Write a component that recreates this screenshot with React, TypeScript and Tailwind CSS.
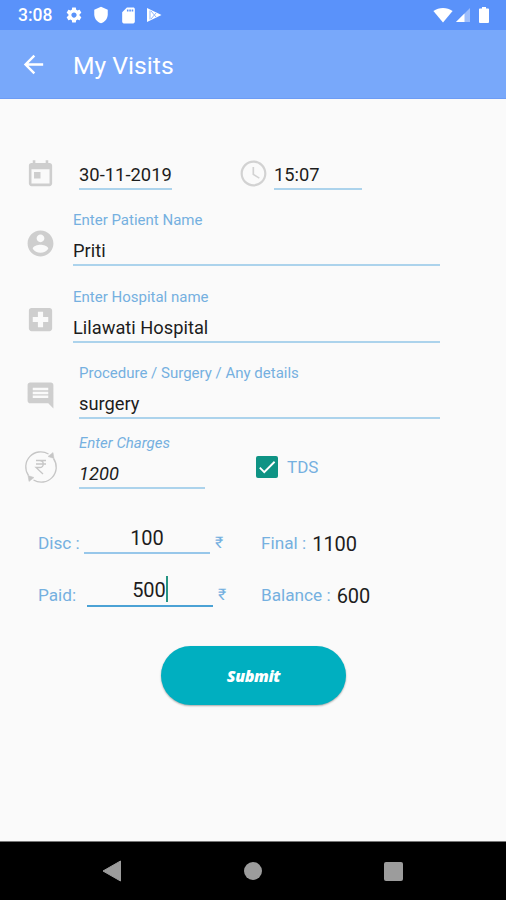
import type { ReactNode } from "react";

type IconProps = { className?: string; d: string };

function Icon({ className = "", d }: IconProps) {
  return (
    <svg viewBox="0 0 24 24" fill="currentColor" className={`shrink-0 ${className}`}>
      <path d={d} />
    </svg>
  );
}

const paths = {
  gear: "M19.43 12.98c.04-.32.07-.64.07-.98s-.03-.66-.07-.98l2.11-1.65c.19-.15.24-.42.12-.64l-2-3.46c-.12-.22-.39-.3-.61-.22l-2.49 1c-.52-.4-1.08-.73-1.69-.98l-.38-2.65C14.46 2.18 14.25 2 14 2h-4c-.25 0-.46.18-.49.42l-.38 2.65c-.61.25-1.17.59-1.69.98l-2.49-1c-.23-.09-.49 0-.61.22l-2 3.46c-.13.22-.07.49.12.64l2.11 1.65c-.04.32-.07.65-.07.98s.03.66.07.98l-2.11 1.65c-.19.15-.24.42-.12.64l2 3.46c.12.22.39.3.61.22l2.49-1c.52.4 1.08.73 1.69.98l.38 2.65c.03.24.24.42.49.42h4c.25 0 .46-.18.49-.42l.38-2.65c.61-.25 1.17-.59 1.69-.98l2.49 1c.23.09.49 0 .61-.22l2-3.46c.12-.22.07-.49-.12-.64l-2.11-1.65zM12 15.5c-1.93 0-3.5-1.57-3.5-3.5s1.57-3.5 3.5-3.5 3.5 1.57 3.5 3.5-1.57 3.5-3.5 3.5z",
  shield: "M12 1L3 5v6c0 5.55 3.84 10.74 9 12 5.16-1.26 9-6.45 9-12V5l-9-4z",
  sd: "M18 2h-8L4.020 8 4 20c0 1.100.9 2 2 2h12c1.100 0 2-.9 2-2V4c0-1.100-.9-2-2-2zm-6 5h-2V4.500h2V7zm3 0h-2V4.500h2V7zm3 0h-2V4.500h2V7z",
  back: "M20 11H7.830l5.590-5.590L12 4l-8 8 8 8 1.410-1.410L7.830 13H20v-2z",
  today: "M19 3h-1V1h-2v2H8V1H6v2H5c-1.110 0-1.990.9-1.990 2L3 19c0 1.100.89 2 2 2h14c1.100 0 2-.9 2-2V5c0-1.100-.9-2-2-2zm0 16H5V8h14v11zM7 10h5v5H7z",
  clock: "M11.990 2C6.470 2 2 6.480 2 12s4.470 10 9.990 10C17.520 22 22 17.520 22 12S17.520 2 11.990 2zM12 20.300a8.300 8.300 0 1 1 0-16.600 8.300 8.300 0 0 1 0 16.600zM12.500 7H11.200v6l5 3 .6-1-4.300-2.600z",
  person: "M12 2C6.480 2 2 6.480 2 12s4.480 10 10 10 10-4.480 10-10S17.520 2 12 2zm0 3c1.660 0 3 1.340 3 3s-1.340 3-3 3-3-1.340-3-3 1.340-3 3-3zm0 14.200c-2.500 0-4.710-1.280-6-3.220.03-1.990 4-3.080 6-3.080 1.990 0 5.970 1.090 6 3.080-1.290 1.940-3.500 3.220-6 3.220z",
  hospital: "M19 3H5c-1.100 0-1.990.9-1.990 2L3 19c0 1.100.9 2 2 2h14c1.100 0 2-.9 2-2V5c0-1.100-.9-2-2-2zm-1 11h-4v4h-4v-4H6v-4h4V6h4v4h4v4z",
  comment: "M21.990 4c0-1.100-.89-2-1.990-2H4c-1.100 0-2 .9-2 2v12c0 1.100.9 2 2 2h14l4 4-.01-18zM18 14H6v-2h12v2zm0-3H6V9h12v2zm0-3H6V6h12v2z",
  check: "M9 16.170L4.830 12l-1.420 1.410L9 19 21 7l-1.410-1.410z",
};

function StatusBar() {
  return (
    <header className="flex h-[30px] items-center bg-[#5a92fa] pl-[18px] text-white">
      <span className="w-[35px] pt-[2px] text-[17.500px] font-medium leading-none">3:08</span>
      <Icon d={paths.gear} className="ml-[12px] size-[18px]" />
      <Icon d={paths.shield} className="ml-[9px] size-[18px]" />
      <Icon d={paths.sd} className="ml-[9px] size-[19px]" />
      <svg viewBox="0 0 16 16" className="ml-[8px] size-4">
        <path d="M1 1 15.500 8 1 15z" fill="white" />
        <path d="M4 3.500v9M5 4l5 6M5 12l5-6" stroke="#8fb5fb" strokeWidth="1" fill="none" />
      </svg>
      <svg viewBox="0 0 20 16" className="ml-auto h-4 w-5">
        <path d="M.4 4C6 0 14 0 19.600 4L10 15.500z" fill="white" />
      </svg>
      <svg viewBox="0 0 16 16" className="ml-[2px] size-4">
        <path d="M15 1v14H1z" fill="white" opacity=".4" />
        <path d="M9.500 6.500V15H1z" fill="white" />
      </svg>
      <svg viewBox="0 0 12 18" className="mr-[16px] ml-[7px] h-[18px] w-[12px]">
        <path d="M4 1h4v1.500h2.200q.8 0 .8.8V16q0 1-1 1H2q-1 0-1-1V3.300q0-.8.8-.8H4z" fill="white" />
      </svg>
    </header>
  );
}

function Field({ label, value, className, italic = false }: { label: string; value: string; className: string; italic?: boolean }) {
  return (
    <label className={`flex flex-col border-b-2 border-[#acd3ec] ${italic ? "italic" : ""} ${className}`}>
      <span className="text-[15px] leading-[18px] text-[#75b0e0]">{label}</span>
      <span className="mt-[8px] h-[27px] text-[18.300px] leading-[27px] text-[#1d1d1d]">{value}</span>
    </label>
  );
}

function Row({ className, children }: { className: string; children: ReactNode }) {
  return <div className={`flex items-end ${className}`}>{children}</div>;
}

function ChargesIcon() {
  return (
    <svg viewBox="0 0 34 34" className="mb-[5px] ml-6 size-[34px] text-[#c6c6c6]" fill="none" stroke="currentColor" strokeWidth="1.300">
      <path d="M4.500 25.500A15 15 0 0 1 24.500 4M29.500 8.500A15 15 0 0 1 9.500 30" />
      <path d="M24 6.500 29 2.500 30 8.500zM10 27.500 5 31.500 4 25.500z" fill="currentColor" strokeWidth=".5" />
      <path d="M12 10.500h10M12 14h10M12 10.500h3.500c5 0 5 7 0 7h-3.500l7 6.500" />
    </svg>
  );
}

export default function App() {
  return (
    <div className="flex h-[900px] w-[506px] flex-col overflow-hidden bg-[#fafafa] font-[Roboto,'Liberation_Sans',sans-serif]">
      <StatusBar />
      <div className="flex h-[69px] items-center border-b border-[#6d9cf5] bg-[#78a8fa] text-white">
        <Icon d={paths.back} className="ml-[19px] size-[29px]" />
        <h1 className="ml-[25px] pt-[4px] text-[24.700px] leading-none">My Visits</h1>
      </div>

      <main className="flex grow flex-col text-[18.300px] text-[#1d1d1d]">
        <Row className="h-[91px]">
          <Icon d={paths.today} className="ml-[25px] size-[31px] text-[#cecece]" />
          <span className="ml-[23px] h-[31px] w-[93px] whitespace-nowrap border-b-2 border-[#acd3ec] text-[18.400px] leading-[32px]">30-11-2019</span>
          <Icon d={paths.clock} className="mb-[1px] ml-[66px] size-[31px] text-[#d2d2d2]" />
          <span className="ml-[5px] h-[31px] w-[88px] border-b-2 border-[#acd3ec] leading-[31px]">15:07</span>
        </Row>
        <Row className="h-[76px]">
          <Icon d={paths.person} className="mb-[7px] ml-[25px] size-[31px] text-[#cecece]" />
          <Field label="Enter Patient Name" value="Priti" className="ml-[17px] w-[367px]" />
        </Row>
        <Row className="h-[77px]">
          <Icon d={paths.hospital} className="mb-[8px] ml-[25px] size-[31px] text-[#cecece]" />
          <Field label="Enter Hospital name" value="Lilawati Hospital" className="ml-[17px] w-[367px]" />
        </Row>
        <Row className="h-[76px]">
          <Icon d={paths.comment} className="mb-[8px] ml-[25px] size-[31px] text-[#cecece]" />
          <Field label="Procedure / Surgery / Any details" value="surgery" className="ml-[23px] w-[361px]" />
        </Row>
        <Row className="h-[70px]">
          <ChargesIcon />
          <Field label="Enter Charges" value="1200" italic className="ml-[21px] w-[126px]" />
          <span className="mb-[11px] ml-[51px] flex size-[22px] items-center justify-center rounded-[2px] bg-[#0e9384] text-white">
            <Icon d={paths.check} className="size-[22px]" />
          </span>
          <span className="mb-[10px] ml-[9px] text-[17px] leading-[24px] text-[#75b0e0]">TDS</span>
        </Row>
        <Row className="h-[65px] text-[#75b0e0]">
          <span className="ml-[38px] w-[46px] text-[17.200px] leading-[22px]">Disc :</span>
          <span className="h-[29px] w-[126px] border-b-2 border-[#97c7ea] text-center text-[20px] leading-[26px] text-[#1d1d1d]">100</span>
          <span className="ml-[5px] w-[46px] text-[16px] leading-[22px]">₹</span>
          <span className="text-[17.200px] leading-[22px]">Final :</span>
          <span className="ml-[6px] text-[20px] leading-[19px] text-[#1d1d1d]">1100</span>
        </Row>
        <Row className="h-[53px] text-[#75b0e0]">
          <span className="ml-[38px] w-[49px] text-[17.200px] leading-[24px]">Paid:</span>
          <span className="flex h-[31px] w-[126px] justify-center border-b-2 border-[#4ba2d5] text-[20px] leading-[29px] text-[#1d1d1d]">
            500<i className="h-[26px] w-[2px] bg-[#269483]" />
          </span>
          <span className="ml-[5px] w-[43px] text-[16px] leading-[24px]">₹</span>
          <span className="text-[17.200px] leading-[24px]">Balance :</span>
          <span className="ml-[6px] text-[20px] leading-[21px] text-[#1d1d1d]">600</span>
        </Row>
        <button className="mt-[39px] ml-[161px] h-[59px] w-[185px] rounded-full bg-[#00afc0] font-['Open_Sans',sans-serif] text-[16px] font-extrabold italic tracking-[-0.400px] text-white shadow-[0_1px_2px_#0005]">
          Submit
        </button>
      </main>

      <nav className="flex h-[59px] shrink-0 items-center border-t border-[#777] bg-black">
        <svg viewBox="0 0 20 22" className="ml-[102px] h-[22px] w-[20px]">
          <path d="M18.500 1v20L1 11z" fill="#9c9c9c" stroke="#9c9c9c" strokeLinejoin="round" />
        </svg>
        <span className="ml-[122px] size-[18px] rounded-full bg-[#9c9c9c]" />
        <span className="ml-[122px] size-[19px] rounded-[2px] bg-[#9c9c9c]" />
      </nav>
    </div>
  );
}
